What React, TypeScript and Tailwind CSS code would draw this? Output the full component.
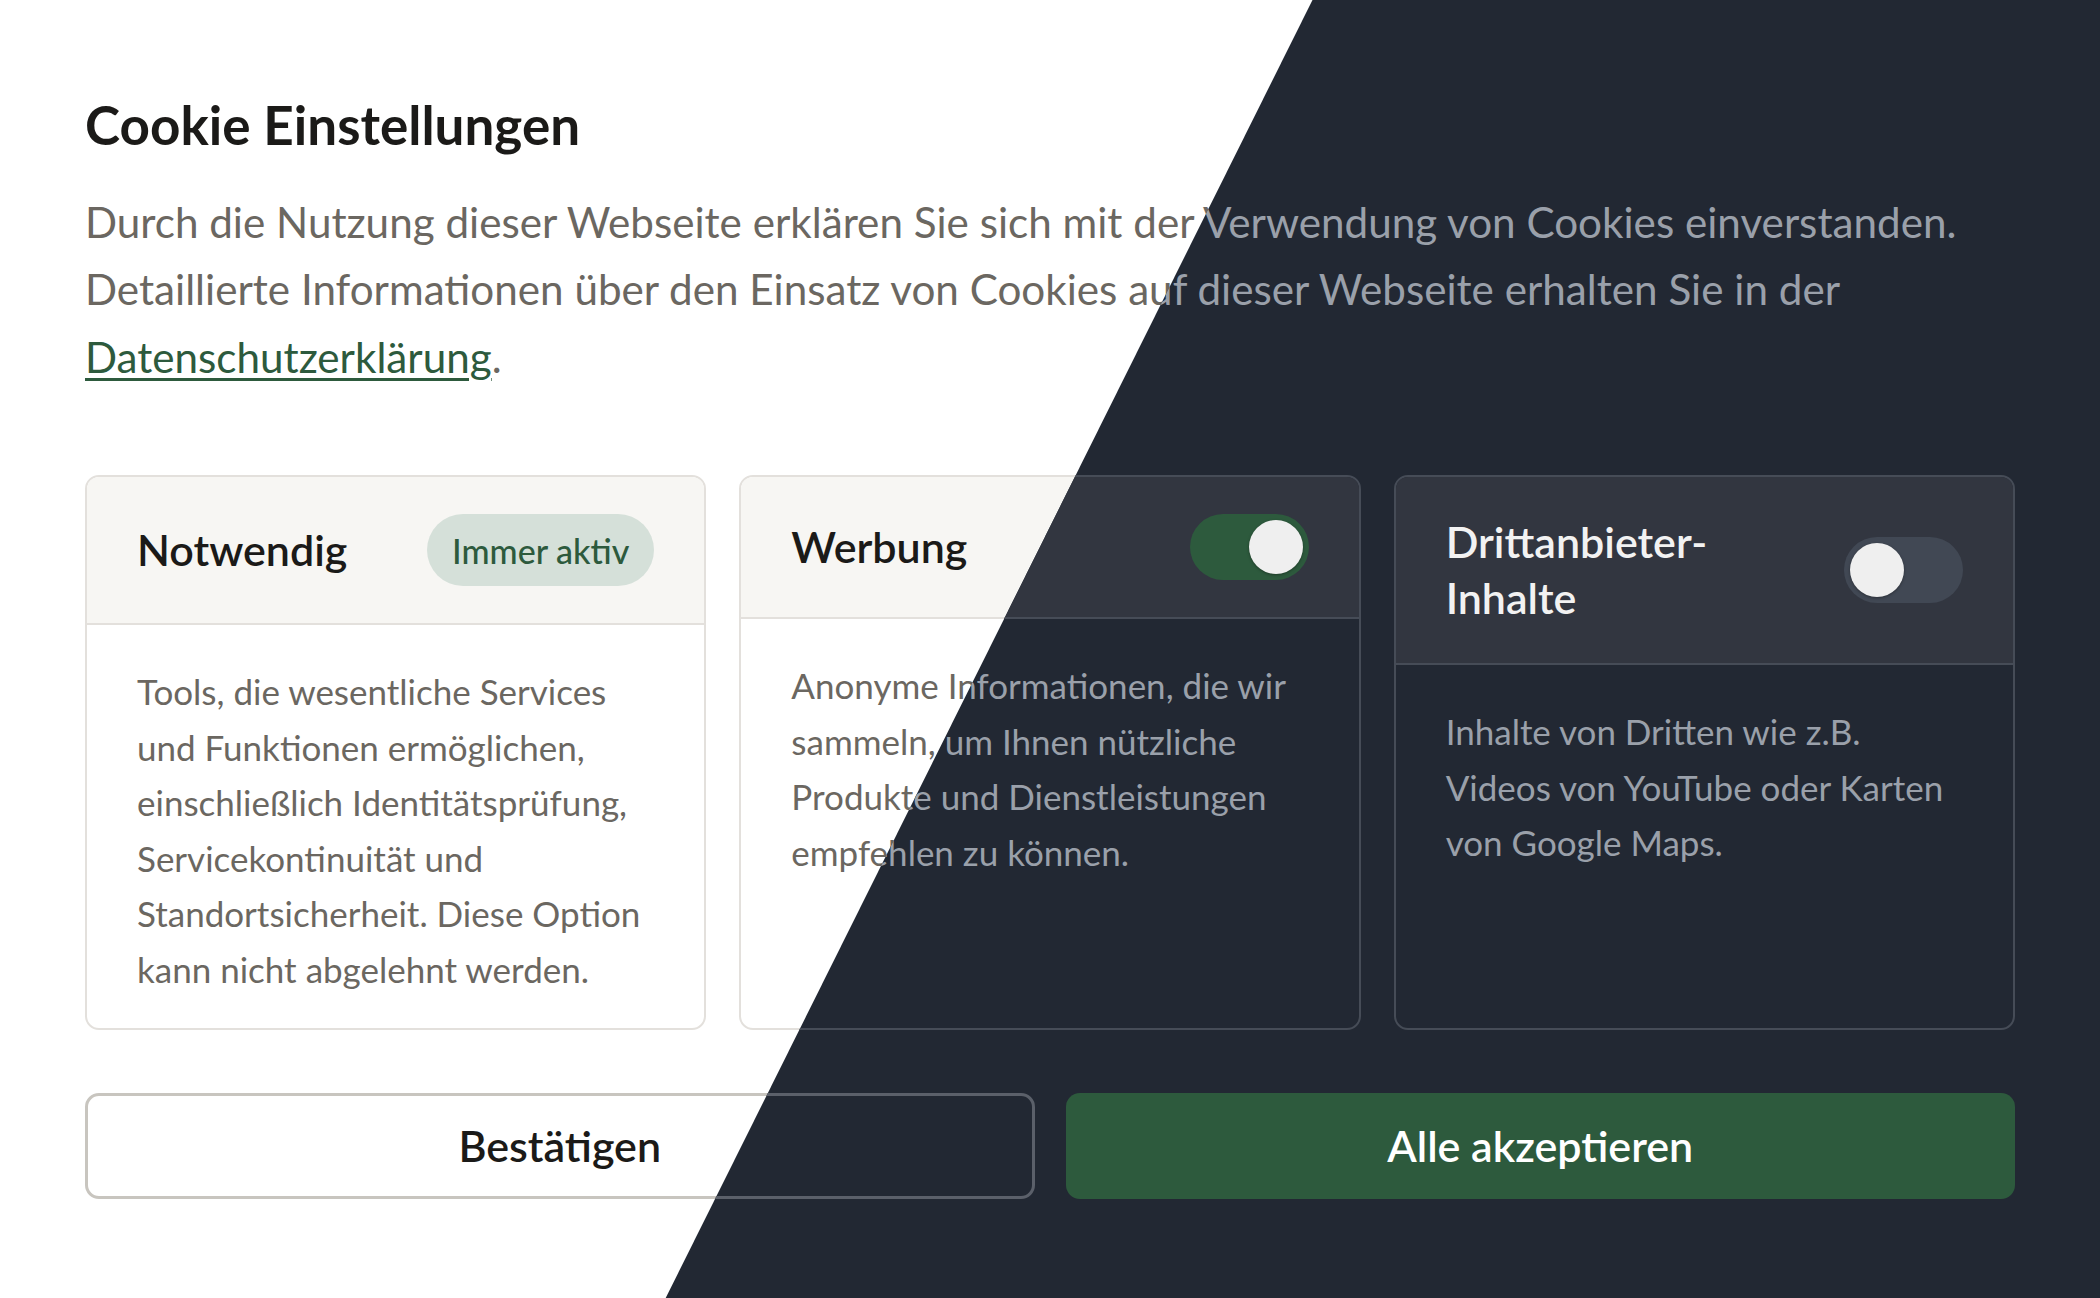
import React from 'react';

type Tone = { dark: boolean };

const FONT = "font-['Lato','Noto_Sans',sans-serif]";

function Toggle({ on, dark }: { on: boolean } & Tone) {
  const track = on ? 'bg-[#2d5a3d] justify-end' : dark ? 'bg-[#414854] justify-start' : 'bg-[#d6d3ce] justify-start';
  return (
    <div className={`flex h-[66px] w-[119px] shrink-0 items-center rounded-full p-[6px] ${track}`}>
      <div className="h-[54px] w-[54px] rounded-full bg-[#efefef] shadow-[0_1px_3px_rgba(0,0,0,0.35)]" />
    </div>
  );
}

function Card({ title, text, right, dark }: { title: string; text: string; right: React.ReactNode } & Tone) {
  return (
    <div className={`flex flex-col overflow-hidden rounded-[14px] border-2 ${dark ? 'border-[#464c57]' : 'border-[#e3e0dc]'}`}>
      <div className={`flex items-center justify-between gap-[40px] border-b-2 px-[50px] py-[37px] ${dark ? 'border-[#464c57] bg-[#323640]' : 'border-[#e3e0dc] bg-[#f7f6f3]'}`}>
        <h2 className={`text-[43px] font-semibold leading-[56px] ${dark ? 'text-[#f2f2f2]' : 'text-[#1b1a18]'}`}>{title}</h2>
        {right}
      </div>
      <p className={`flex-1 pl-[50px] pr-[47px] pt-[39px] text-[35px] leading-[55.5px] ${dark ? 'text-[#9aa0aa]' : 'text-[#6b6761]'}`}>
        {text}
      </p>
    </div>
  );
}

function Page({ dark }: Tone) {
  return (
    <div className={`h-[1298px] w-full px-[85px] pt-[93px] ${FONT} ${dark ? 'bg-[#222833]' : 'bg-white'}`}>
      <h1 className={`text-[53px] font-bold leading-[1.2] ${dark ? 'text-[#f2f2f2]' : 'text-[#1b1a18]'}`}>Cookie Einstellungen</h1>
      <p className={`mt-[31px] text-[42.2px] leading-[67.6px] ${dark ? 'text-[#9aa0aa]' : 'text-[#6b6761]'}`}>
        Durch die Nutzung dieser Webseite erklären Sie sich mit der Verwendung von Cookies einverstanden. Detaillierte
        Informationen über den Einsatz von Cookies auf dieser Webseite erhalten Sie in der{' '}
        <a
          href="#"
          className={`underline decoration-[3px] underline-offset-[5px] ${dark ? 'text-[#7fb08f]' : 'text-[#2d5a3d]'}`}
        >
          Datenschutzerklärung
        </a>
        .
      </p>

      <div className="mt-[85px] grid h-[555px] grid-cols-3 gap-[33px]">
        <Card
          dark={dark}
          title="Notwendig"
          text="Tools, die wesentliche Services und Funktionen ermöglichen, einschließlich Identitätsprüfung, Servicekontinuität und Standortsicherheit. Diese Option kann nicht abgelehnt werden."
          right={
            <span className={`flex h-[72px] items-center rounded-full px-[25px] text-[34px] font-medium ${dark ? 'bg-[#2f4a3a] text-[#cfe3d6]' : 'bg-[#d5e0d9] text-[#2d5a3d]'}`}>
              Immer aktiv
            </span>
          }
        />
        <Card
          dark={dark}
          title="Werbung"
          text="Anonyme Informationen, die wir sammeln, um Ihnen nützliche Produkte und Dienstleistungen empfehlen zu können."
          right={<Toggle on dark={dark} />}
        />
        <Card
          dark={dark}
          title="Drittanbieter-Inhalte"
          text="Inhalte von Dritten wie z.B. Videos von YouTube oder Karten von Google Maps."
          right={<Toggle on={false} dark={dark} />}
        />
      </div>

      <div className="mt-[63px] grid grid-cols-2 gap-[31px]">
        <button className={`h-[106px] rounded-[14px] border-[3px] text-[43px] font-semibold ${dark ? 'border-[#5b606a] text-[#f2f2f2]' : 'border-[#c8c5bf] bg-white text-[#1b1a18]'}`}>
          Bestätigen
        </button>
        <button className="h-[106px] rounded-[14px] bg-[#2d5a3d] text-[43px] font-semibold text-white">
          Alle akzeptieren
        </button>
      </div>
    </div>
  );
}

export default function App() {
  return (
    <div className="relative h-[1298px] w-full overflow-hidden">
      <Page dark={false} />
      <div aria-hidden className="absolute inset-0 [clip-path:polygon(62.5%_0,100%_0,100%_100%,31.7%_100%)]">
        <Page dark />
      </div>
    </div>
  );
}
